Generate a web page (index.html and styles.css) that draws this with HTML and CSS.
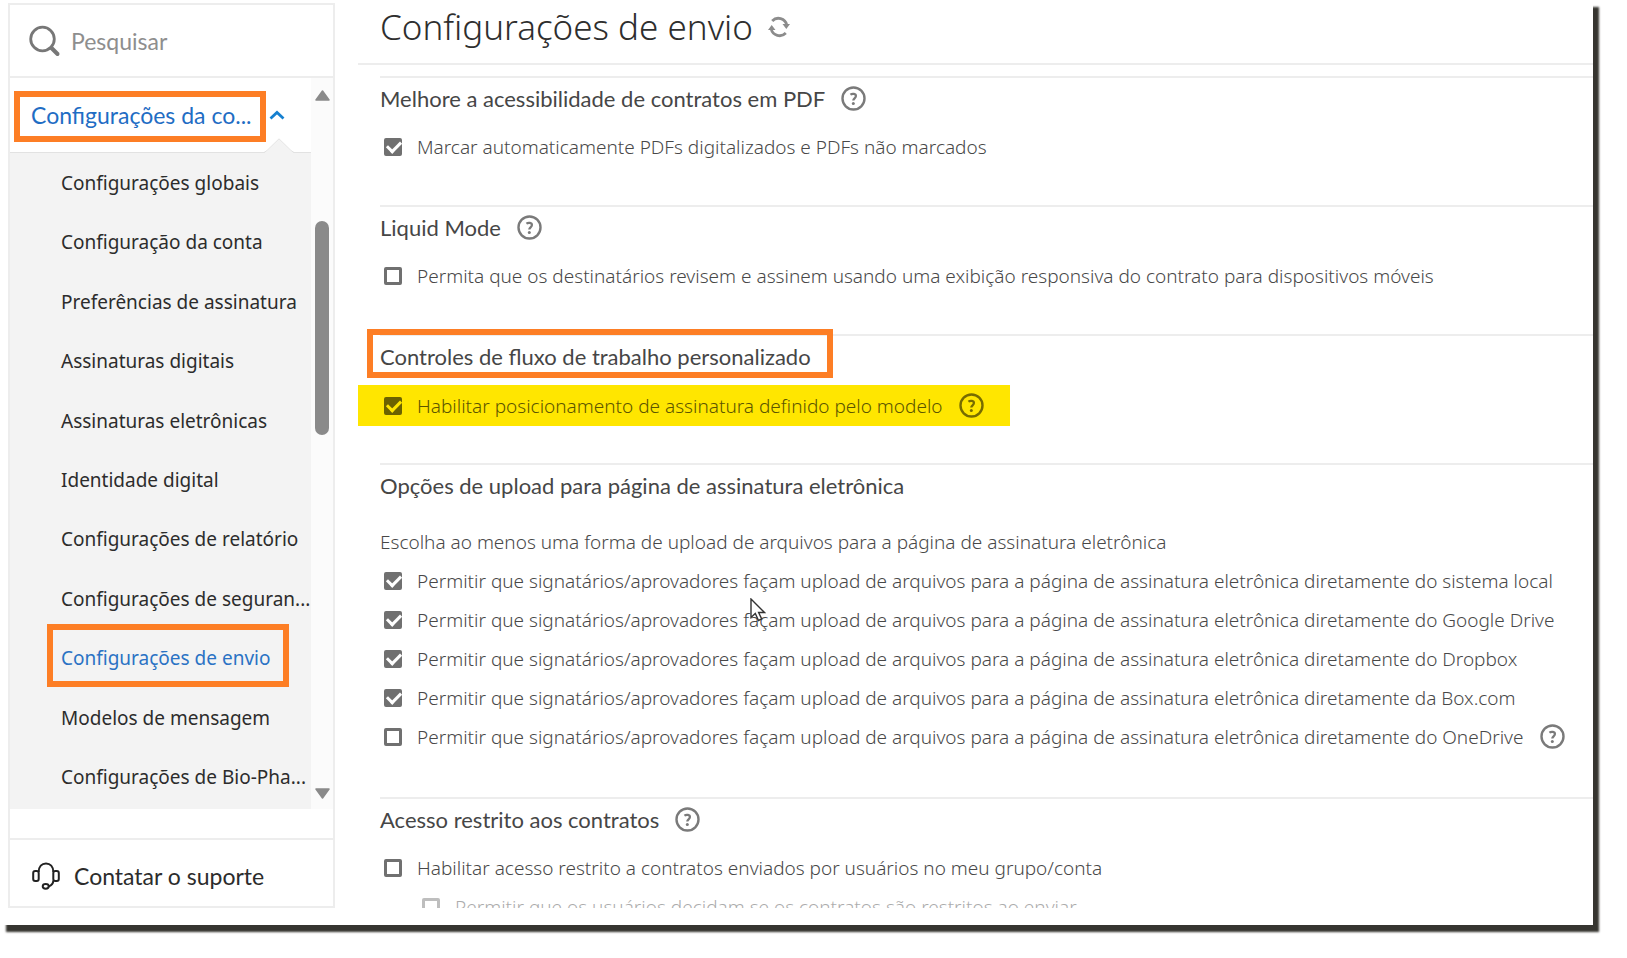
FILE: index.html
```
<!DOCTYPE html>
<html lang="pt-BR">
<head>
<meta charset="utf-8">
<title>Configurações de envio</title>
<link rel="stylesheet" href="styles.css">
</head>
<body>
<svg class="defs" aria-hidden="true">
  <symbol id="help" viewBox="0 0 25 25">
    <circle cx="12.5" cy="12.5" r="11" fill="none" stroke="currentColor" stroke-width="2.4"/>
    <path d="M9.4 8.600c2-1.300 5.500-1 5.500 1.500 0 2.200-2.600 2.400-2.600 4.500" fill="none" stroke="currentColor" stroke-width="2.300"/>
    <circle cx="12.300" cy="17.500" r="1.500" fill="currentColor"/>
  </symbol>
</svg>
<div class="window">
  <aside class="sidebar">
    <label class="search">
      <svg width="32" height="32" viewBox="0 0 32 32" aria-hidden="true"><circle cx="13.500" cy="14" r="11.800" fill="none" stroke="#777" stroke-width="2.800"/><path d="M22.500 23L28.500 29" stroke="#777" stroke-width="4" stroke-linecap="round"/></svg>
      <input type="search" placeholder="Pesquisar" aria-label="Pesquisar">
    </label>
    <div class="scroller">
      <nav class="menu">
        <button class="group" type="button" aria-expanded="true">
          <span class="group-name marked">Configurações da co...</span>
          <svg width="16" height="10" viewBox="0 0 16 10" aria-hidden="true"><path d="M1.500 8.500L8 2.500l6.500 6" fill="none" stroke="#1680d0" stroke-width="2.800"/></svg>
          <svg class="notch" width="30" height="15" viewBox="0 0 30 15" aria-hidden="true"><path d="M0 15L3 13 15 1l12 12 3 2z" fill="#f3f3f3"/><path d="M0 14.500L3 12.500 15 .8l12 11.700 3 2" fill="none" stroke="#e2e2e2"/></svg>
        </button>
        <ul class="items">
          <li><a href="#">Configurações globais</a></li>
          <li><a href="#">Configuração da conta</a></li>
          <li><a href="#">Preferências de assinatura</a></li>
          <li><a href="#">Assinaturas digitais</a></li>
          <li><a href="#">Assinaturas eletrônicas</a></li>
          <li><a href="#">Identidade digital</a></li>
          <li><a href="#">Configurações de relatório</a></li>
          <li><a href="#">Configurações de seguran...</a></li>
          <li><a class="current marked" href="#">Configurações de envio</a></li>
          <li><a href="#">Modelos de mensagem</a></li>
          <li><a href="#">Configurações de Bio-Pha...</a></li>
        </ul>
      </nav>
      <div class="track" aria-hidden="true">
        <svg width="15" height="11" viewBox="0 0 15 11"><path d="M7.500 1L14 10H1z" fill="#8a8a8a" stroke="#8a8a8a" stroke-width="1.500" stroke-linejoin="round"/></svg>
        <div class="rail"><div class="thumb"></div></div>
        <svg width="15" height="11" viewBox="0 0 15 11"><path d="M7.500 10L14 1H1z" fill="#8a8a8a" stroke="#8a8a8a" stroke-width="1.500" stroke-linejoin="round"/></svg>
      </div>
    </div>
    <a class="support" href="#">
      <svg width="28" height="28" viewBox="0 0 28 28" fill="none" stroke="#222" stroke-width="2" aria-hidden="true"><rect x="1.200" y="9" width="5.500" height="10" rx="2"/><rect x="21.300" y="9" width="5.500" height="10" rx="2"/><path d="M6.700 10C6.700 4.500 9.800 1.500 14 1.500s7.300 3 7.300 8.500M21.300 18.500c0 3-2 5-4.800 6"/><ellipse cx="13.700" cy="24.300" rx="3" ry="2.400"/></svg>
      Contatar o suporte
    </a>
  </aside>

  <main class="content">
    <header class="title">
      <h1>Configurações de envio</h1>
      <button class="icon-button" type="button" aria-label="Atualizar">
        <svg width="22" height="22" viewBox="0 0 22 22" aria-hidden="true"><path d="M4.200 5A8.600 8.600 0 0 1 18.800 9M17.800 17A8.600 8.600 0 0 1 3.200 13" fill="none" stroke="#8c8c8c" stroke-width="2.800"/><path d="M14.500 8H22l-3.700 5zM7.500 14H0l3.700-5z" fill="#8c8c8c"/></svg>
      </button>
    </header>
    <form class="sections">
      <section>
        <h2><span>Melhore a acessibilidade de contratos em PDF</span><button class="icon-button" type="button" aria-label="Ajuda"><svg class="help"><use href="#help"/></svg></button></h2>
        <div class="row"><label><input type="checkbox" checked>Marcar automaticamente PDFs digitalizados e PDFs não marcados</label></div>
      </section>
      <section>
        <h2><span>Liquid Mode</span><button class="icon-button" type="button" aria-label="Ajuda"><svg class="help"><use href="#help"/></svg></button></h2>
        <div class="row"><label><input type="checkbox">Permita que os destinatários revisem e assinem usando uma exibição responsiva do contrato para dispositivos móveis</label></div>
      </section>
      <section>
        <h2><span class="marked">Controles de fluxo de trabalho personalizado</span></h2>
        <div class="row highlight"><label><input type="checkbox" checked>Habilitar posicionamento de assinatura definido pelo modelo</label><button class="icon-button" type="button" aria-label="Ajuda"><svg class="help"><use href="#help"/></svg></button></div>
      </section>
      <section class="uploads">
        <h2><span>Opções de upload para página de assinatura eletrônica</span></h2>
        <p class="row">Escolha ao menos uma forma de upload de arquivos para a página de assinatura eletrônica</p>
        <div class="row"><label><input type="checkbox" checked>Permitir que signatários/aprovadores façam upload de arquivos para a página de assinatura eletrônica diretamente do sistema local</label></div>
        <div class="row"><label><input type="checkbox" checked>Permitir que signatários/aprovadores façam upload de arquivos para a página de assinatura eletrônica diretamente do Google Drive</label></div>
        <div class="row"><label><input type="checkbox" checked>Permitir que signatários/aprovadores façam upload de arquivos para a página de assinatura eletrônica diretamente do Dropbox</label></div>
        <div class="row"><label><input type="checkbox" checked>Permitir que signatários/aprovadores façam upload de arquivos para a página de assinatura eletrônica diretamente da Box.com</label></div>
        <div class="row"><label><input type="checkbox">Permitir que signatários/aprovadores façam upload de arquivos para a página de assinatura eletrônica diretamente do OneDrive</label><button class="icon-button" type="button" aria-label="Ajuda"><svg class="help"><use href="#help"/></svg></button></div>
      </section>
      <section>
        <h2><span>Acesso restrito aos contratos</span><button class="icon-button" type="button" aria-label="Ajuda"><svg class="help"><use href="#help"/></svg></button></h2>
        <div class="row"><label><input type="checkbox">Habilitar acesso restrito a contratos enviados por usuários no meu grupo/conta</label></div>
        <div class="row nested"><label><input type="checkbox" disabled>Permitir que os usuários decidam se os contratos são restritos ao enviar</label></div>
      </section>
    </form>
  </main>
  <svg class="pointer" width="16" height="24" viewBox="0 0 16 24" aria-hidden="true"><path d="M1 1v18.500l4.300-4 3.200 7 3.200-1.500-3.100-6.500H14.500z" fill="#fff" stroke="#333" stroke-width="1.400"/></svg>
</div>
</body>
</html>
```
FILE: styles.css
```
* {
  box-sizing: border-box;
}

body {
  margin: 0;
  padding: 0 34px 33px 0;
  background: #fff;
  font-family: "Noto Sans", sans-serif;
  font-size: 19px;
}

button {
  border: 0;
  padding: 0;
  background: none;
  font: inherit;
  color: inherit;
  text-align: left;
}

a {
  color: inherit;
  text-decoration: none;
}

.defs {
  display: none;
}

.window {
  position: relative;
  display: flex;
  gap: 23px;
  height: calc(100vh - 33px);
  padding: 3px 0 17px 8px;
  background: #fff;
  box-shadow: 6px 7px 2px #363530;
}

/* Orange callout frame */
.marked {
  position: relative;
}

.marked::after {
  content: "";
  position: absolute;
  inset: -10px -14px;
  border: 6px solid #fd7e25;
  pointer-events: none;
}

/* Sidebar */
.sidebar {
  display: flex;
  flex-direction: column;
  flex: 0 0 327px;
  border: 2px solid #ededed;
  color: #2c2c2c;
}

.search {
  display: flex;
  align-items: center;
  gap: 10px;
  flex: 0 0 73px;
  padding-left: 19px;
  border-bottom: 2px solid #ededed;
}

.search input {
  width: 200px;
  border: 0;
  padding: 0;
  outline: 0;
  background: none;
  font-family: Lato, sans-serif;
  font-size: 23px;
  color: #2c2c2c;
}

.search input::placeholder {
  color: #8e8e8e;
  opacity: 1;
}

.scroller {
  display: flex;
  flex: 1;
  min-height: 0;
  margin-bottom: 29px;
}

.menu {
  display: flex;
  flex-direction: column;
  flex: 1;
  min-width: 0;
}

.group {
  position: relative;
  display: flex;
  align-items: center;
  gap: 17px;
  flex: 0 0 75px;
  padding-left: 21px;
  border-bottom: 1px solid #e2e2e2;
  font-family: Lato, sans-serif;
  font-size: 23px;
  line-height: 31px;
  color: #1f6dc4;
}

.group-name.marked::after {
  inset: -9px -14px -11px -17px;
}

.notch {
  position: absolute;
  right: 17px;
  bottom: -1px;
}

.items {
  display: flex;
  flex-direction: column;
  flex: 1;
  margin: 0;
  padding: 0 0 2px;
  background: #f3f3f3;
  list-style: none;
}

.items li {
  display: flex;
  align-items: center;
  flex: 1;
  padding-left: 51px;
  white-space: nowrap;
}

.items .current {
  color: #2a72c4;
}

.items .marked::after {
  inset: -21px -19px -16px -14px;
}

.track {
  display: flex;
  flex-direction: column;
  align-items: center;
  flex: 0 0 22px;
  padding: 12px 0 10px;
  background: #fbfbfb;
}

.rail {
  flex: 1;
  padding-top: 120px;
}

.thumb {
  width: 14px;
  height: 214px;
  border-radius: 7px;
  background: #8a8a8a;
}

.support {
  display: flex;
  align-items: center;
  gap: 14px;
  flex: 0 0 68px;
  padding: 5px 0 0 22px;
  border-top: 2px solid #ededed;
  font-family: Lato, sans-serif;
  font-size: 23px;
}

/* Content */
.content {
  flex: 1;
  min-width: 0;
  overflow: hidden;
}

.title {
  display: flex;
  align-items: center;
  gap: 15px;
  height: 62px;
  margin-bottom: 11px;
  padding: 0 0 12px 22px;
  border-bottom: 2px solid #ededed;
}

h1 {
  margin: 0;
  font-size: 35px;
  font-weight: 300;
  line-height: 48px;
  color: #2e2e2e;
}

.icon-button {
  display: flex;
  color: #7a7a7a;
}

.help {
  width: 25px;
  height: 25px;
}

.sections {
  padding-left: 22px;
}

section {
  padding-bottom: 39px;
  border-top: 2px solid #ededed;
}

h2 {
  display: flex;
  align-items: center;
  gap: 16px;
  height: 41px;
  margin: 0 0 8px;
  font-family: Lato, sans-serif;
  font-size: 22px;
  font-weight: 400;
  line-height: 27px;
  color: #464646;
}

h2 .marked::after {
  inset: -14px -22px -8px -13px;
}

.row {
  display: flex;
  align-items: center;
  gap: 16px;
  height: 39px;
  margin: 0;
  font-weight: 300;
  white-space: nowrap;
  color: #484848;
}

.row label {
  display: flex;
  align-items: center;
  gap: 15px;
  padding-left: 4px;
}

.uploads {
  padding-bottom: 41px;
}

.uploads h2 {
  margin-bottom: 16px;
}

.highlight {
  width: fit-content;
  height: 41px;
  margin: 0 0 -2px -22px;
  padding: 0 26px 0 22px;
  background: #ffe600;
  color: #5c5500;
}

.highlight .icon-button {
  color: #776c00;
}

.nested {
  padding-left: 38px;
  opacity: 0.45;
}

input[type="checkbox"] {
  appearance: none;
  width: 18px;
  height: 18px;
  margin: 0;
  border: 3px solid #707070;
  border-radius: 2px;
  background: #fff;
}

input[type="checkbox"]:checked {
  display: grid;
  place-items: center;
  background: #707070;
}

input[type="checkbox"]:checked::before {
  content: "";
  width: 11px;
  height: 6px;
  margin-bottom: 4px;
  border: solid #fff;
  border-width: 0 0 3px 3px;
  transform: rotate(-45deg);
}

.highlight input[type="checkbox"]:checked {
  border-color: #6b6200;
  background: #6b6200;
}

.highlight input[type="checkbox"]:checked::before {
  border-color: #ffe600;
}

.pointer {
  position: absolute;
  left: 750px;
  top: 598px;
}
```
